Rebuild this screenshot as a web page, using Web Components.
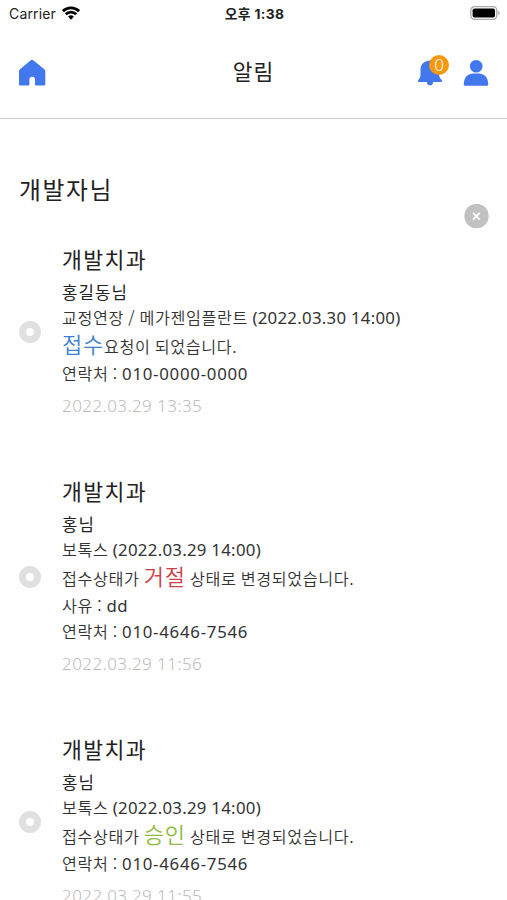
<!DOCTYPE html>
<html lang="ko">
<head>
<meta charset="utf-8">
<title>알림</title>
<style>
html,body{margin:0;height:900px;overflow:hidden;background:#fefefe}
body{font-family:"Noto Sans CJK KR",sans-serif;color:#333}
</style>
</head>
<body>
<alarm-page></alarm-page>
<script>
const define=(name,html)=>customElements.define(name,class extends HTMLElement{
  constructor(){super();this.attachShadow({mode:'open'}).innerHTML=html;}
});

define('status-bar',`<style>
:host{display:grid;grid-template-columns:1fr auto 1fr;align-items:center;height:28px;padding:0 7px 0 9px;color:#222;box-sizing:border-box}
.l{display:flex;align-items:center;gap:6px;font:400 14px/28px Inter,sans-serif;letter-spacing:.15px}
.t{font:700 13.8px/28px Inter,"Noto Sans CJK KR",sans-serif;letter-spacing:.35px}
svg{display:block}.b{justify-self:end;margin-top:-2px}
.l svg{margin-top:-2px}
</style>
<div class="l"><span>Carrier</span><svg width="18" height="14" viewBox="0 0 18 14" fill="none" stroke="#000" stroke-width="2.9"><path d="M.9 5.1a11.7 11.7 0 0 1 16.2 0M3.8 8.2a7.500 7.500 0 0 1 10.400 0"/><path d="M6.1 10.600a4.200 4.200 0 0 1 5.800 0L9 13.700z" fill="#000" stroke="none"/></svg></div>
<div class="t">오후 1:38</div>
<svg class="b" width="30" height="14" viewBox="0 0 30 14"><rect x=".8" y=".7" width="26" height="12.6" rx="3.7" fill="#fff" stroke="#aaa" stroke-width="1.3"/><rect x="2.6" y="2.4" width="22.4" height="9.2" rx="1.8" fill="#000"/><path d="M28.3 4.8v4.4q1.5-.8 1.5-2.2t-1.5-2.2z" fill="#aaa"/></svg>`);

define('count-badge',`<style>
:host{position:absolute;left:12px;top:-4px;width:20px;height:20px;border-radius:50%;background:#f8980d;color:#fff;text-align:center;font:300 17px/20px "Noto Sans",sans-serif}
</style><slot></slot>`);

define('app-header',`<style>
:host{display:flex;justify-content:space-between;align-items:center;height:91px;padding:0 18px 0;border-bottom:1px solid #cdcdcd;box-sizing:border-box}
.side{display:flex;width:72px;align-items:center;justify-content:space-between}
svg{display:block}h1{margin:0 0 5px;font-size:21.5px;font-weight:400;line-height:32px;color:#222;letter-spacing:1px}
.bell{position:relative}
</style>
<div class="side"><svg width="28" height="28" viewBox="0 0 28 28"><path d="M12.8 1.3Q14 .3 15.2 1.3L26.300 10.3Q27.3 11.200 27.3 12.500v13.100q0 1-1 1H18q-1 0-1-1V20.500q0-2.700-2.800-2.700T11.400 20.500v5.100q0 1-1 1H2Q1 26.600 1 25.600V12.500q0-1.300 1-2.200z" fill="#4277ed"/></svg></div>
<h1><slot></slot></h1>
<div class="side"><div class="bell"><svg width="26" height="28" viewBox="0 0 26 28"><path d="M13 1.500c5.300 0 9 3.700 9 9v4.500c0 3 1.200 4.300 2.700 6 .8 1 .4 2-.9 2H2.200c-1.300 0-1.700-1-.9-2C2.800 19.300 3.500 18 3.500 15v-4.500c0-5.300 4.200-9 9.500-9zM10 22h6v1.400a3 2.800 0 0 1-6 0z" fill="#4277ed"/></svg><count-badge>0</count-badge></div>
<svg width="26" height="28" viewBox="0 0 26 28"><circle cx="13.200" cy="7.300" r="6.300" fill="#4277ed"/><path d="M.8 25.300C.8 18 5.500 14.600 10 14.600h6c4.500 0 9.200 3.400 9.200 10.700q0 1.500-1.500 1.500h-21.400Q.8 26.800 .8 25.300z" fill="#4277ed"/></svg></div>`);

define('close-button',`<style>:host{display:block;width:25px;height:25px}svg{display:block}</style>
<svg width="25" height="25" viewBox="0 0 25 25"><circle cx="12.500" cy="12" r="12.200" fill="#c1c1c1"/><path d="M9 8.900l6.700 6.700M15.700 8.900L9 15.600" stroke="#fff" stroke-width="1.900"/></svg>`);

define('alarm-item',`<style>
:host{display:grid;grid-template-columns:43px 1fr;align-items:center;margin-bottom:49px}
.dot{width:8px;height:8px;margin-top:2px;border:7px solid #e0e0e0;border-radius:50%;background:#fff}
</style><div class="dot"></div><div><slot></slot></div>`);

const line=(name,h,lh,css)=>define(name,`<style>:host{display:block;white-space:nowrap;height:${h}px;line-height:${lh}px;${css}}</style><slot></slot>`);
line('clinic-name',41,40,'font-size:21.600px;font-weight:400;color:#222;letter-spacing:1.400px');
line('patient-name',24,24,'font-size:16.800px;font-weight:400;color:#222;letter-spacing:1.100px');
line('detail-line',26,26,'font-size:16.200px;font-weight:350;letter-spacing:.62px;word-spacing:-.9px');
line('status-line',30,32,'font-size:16.200px;font-weight:350;letter-spacing:.6px;word-spacing:-.9px');
line('time-line',36,39,'font-family:"Noto Sans",sans-serif;font-size:17px;font-weight:300;letter-spacing:.43px;color:#bcbcbc');
define('state-word',`<style>:host{font-size:22px;line-height:1;letter-spacing:.8px;color:var(--state)}</style><slot></slot>`);
define('num-run',`<style>:host{font-family:"Noto Sans",sans-serif;font-size:16.800px;line-height:1;font-weight:400;letter-spacing:var(--ls,.28px);word-spacing:0}</style><slot></slot>`);

define('alarm-page',`<style>
:host{display:block;height:900px;overflow:hidden}
main{padding:54px 18px 0 19px}
h2{margin:0;font-size:23.800px;font-weight:400;line-height:32px;color:#222;letter-spacing:1.600px}
close-button{margin:-1px 0 0 auto}
section{margin-top:10px}
</style>
<status-bar></status-bar>
<app-header>알림</app-header>
<main><h2>개발자님</h2><close-button></close-button>
<section>
<alarm-item><clinic-name>개발치과</clinic-name><patient-name>홍길동님</patient-name><detail-line>교정연장 / 메가젠임플란트 <num-run>(2022.03.30 14:00)</num-run></detail-line><status-line><state-word style="--state:#407fd0">접수</state-word>요청이 되었습니다.</status-line><detail-line>연락처 : <num-run style="--ls:.75px">010-0000-0000</num-run></detail-line><time-line>2022.03.29 13:35</time-line></alarm-item>
<alarm-item><clinic-name>개발치과</clinic-name><patient-name>홍님</patient-name><detail-line>보톡스 <num-run>(2022.03.29 14:00)</num-run></detail-line><status-line>접수상태가 <state-word style="--state:#cf3f47">거절</state-word> 상태로 변경되었습니다.</status-line><detail-line>사유 : <num-run>dd</num-run></detail-line><detail-line>연락처 : <num-run style="--ls:.75px">010-4646-7546</num-run></detail-line><time-line>2022.03.29 11:56</time-line></alarm-item>
<alarm-item><clinic-name>개발치과</clinic-name><patient-name>홍님</patient-name><detail-line>보톡스 <num-run>(2022.03.29 14:00)</num-run></detail-line><status-line>접수상태가 <state-word style="--state:#91bb43">승인</state-word> 상태로 변경되었습니다.</status-line><detail-line>연락처 : <num-run style="--ls:.75px">010-4646-7546</num-run></detail-line><time-line>2022.03.29 11:55</time-line></alarm-item>
</section></main>`);
</script>
</body>
</html>
